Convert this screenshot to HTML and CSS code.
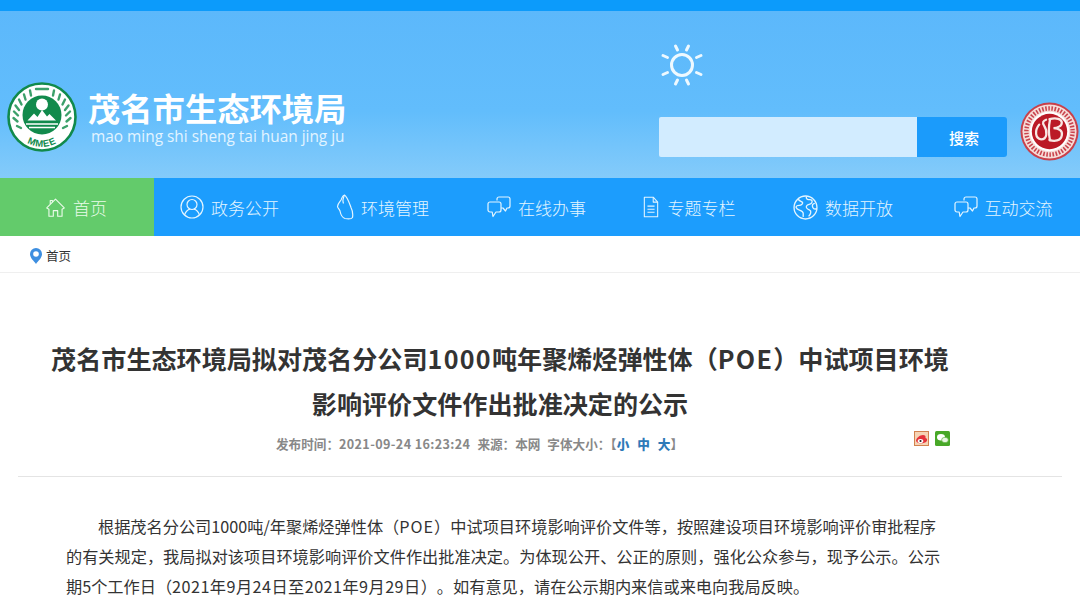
FILE: index.html
```html
<!DOCTYPE html>
<html lang="zh-CN">
<head>
<meta charset="utf-8">
<title>茂名市生态环境局</title>
<link rel="stylesheet" href="styles.css">
</head>
<body>
<div class="topbar"></div>
<header class="header">
  <svg class="logo" viewBox="0 0 70 70" width="70" height="70">
    <circle cx="35" cy="35" r="33.500" fill="#fff" stroke="#118a4c" stroke-width="2.600"/>
    <g fill="none" stroke="#3ba06a" stroke-width="2.400" stroke-linecap="round">
      <path d="M6.500 36l4 3.500M7 29.500l4 4M8.500 23.500l3.500 4.500M12 17.500l2.500 5M17 12.500l1.500 5M23 8.500l1 5M10 44l4 2"/>
      <path d="M63.500 36l-4 3.500M63 29.500l-4 4M61.500 23.500l-3.500 4.500M58 17.500l-2.500 5M53 12.500l-1.500 5M47 8.500l-1 5M60 44l-4 2"/>
      <path d="M29 7h12"/>
    </g>
    <circle cx="35" cy="33" r="19.500" fill="#118a4c"/>
    <circle cx="35" cy="22.500" r="6" fill="#fff"/>
    <path d="M20.500 38.500l6.500-7 3.500 3.500 4.500-7 5 6.500 2.500-2.500 6.500 6.500z" fill="#fff"/>
    <path d="M19 42h32M22 45.500h26" stroke="#fff" stroke-width="1.500"/>
    <defs><path id="logoArc" d="M9 49.500a29.800 29.800 0 0 0 52 0"/></defs>
    <text class="logo-mark"><textPath href="#logoArc" startOffset="50%" text-anchor="middle">MMEE</textPath></text>
  </svg>
  <div class="brand">
    <div class="brand-name">茂名市生态环境局</div>
    <div class="brand-pinyin">mao ming shi sheng tai huan jing ju</div>
  </div>
  <div class="tools">
    <svg class="sun" viewBox="0 0 44 44" width="44" height="44" fill="none" stroke="#eef9ff" stroke-linecap="round">
      <circle cx="22" cy="22" r="10.500" stroke-width="3"/>
      <path stroke-width="3" d="M15.500 3l2 4M28.500 3l-2 4M3 12.500l4.500 2M41 12.500l-4.500 2M3 31.500l4.500-2M41 31.500l-4.500-2M15.500 41l2-4M28.500 41l-2-4"/>
    </svg>
    <form class="search">
      <div class="search-input"></div>
      <div class="search-btn">搜索</div>
    </form>
  </div>
  <svg class="emblem" viewBox="0 0 60 60" width="59" height="59">
    <circle cx="30" cy="30" r="29.500" fill="#c9404a"/>
    <circle cx="30" cy="30" r="27.500" fill="#f6dcd8"/>
    <circle cx="30" cy="30" r="23.500" fill="none" stroke="#c9434d" stroke-width="4.500" stroke-dasharray="1.600 1.600"/>
    <circle cx="30" cy="30" r="20" fill="#fff"/>
    <circle cx="30" cy="30" r="18" fill="#bb1a26"/>
    <g fill="none" stroke="#f9e8e4" stroke-width="2.300" stroke-linecap="round">
      <path d="M19.500 23c-5 6-4 14 2 15 6 0 7-8 3-14-2-3-1-5 2-6"/>
      <path d="M30 17.500c7-2 12.500 0 12.500 3.500s-4.500 5.500-8.500 5.500c6 0 9.500 3 8.500 7.500-1 5.500-7.500 6.500-12.500 4.500"/>
      <path d="M30.500 18c-1.500 7-1.500 14 0 21"/>
    </g>
  </svg>
</header>
<nav class="nav">
  <a class="nav-item active">
    <svg class="nav-ico" viewBox="0 0 24 24" width="21" height="21" fill="none" stroke="currentColor" stroke-width="1.300" stroke-linejoin="round"><path d="M2 12.500 12 2.500l10 10-2.500 1.500v8h-5v-6.500h-5V22h-5v-8z"/><path d="M6 8V4h2.500v2"/></svg>
    <span>首页</span>
  </a>
  <a class="nav-item">
    <svg class="nav-ico" viewBox="0 0 24 24" width="24" height="24" fill="none" stroke="currentColor" stroke-width="1.200"><circle cx="12" cy="12" r="11"/><circle cx="12" cy="9.500" r="5"/><path d="M4.500 20c1.500-4 4-5.500 5.500-5.800M19.500 20c-1.500-4-4-5.500-5.500-5.800"/></svg>
    <span>政务公开</span>
  </a>
  <a class="nav-item">
    <svg class="nav-ico" viewBox="0 0 18 26" width="18" height="26" fill="none" stroke="currentColor" stroke-width="1.200" stroke-linejoin="round"><path d="M8.500 1C6 1.500 6 4 5 6 3.500 8 1.500 10 1.500 12.500c0 1.500 2 2.500 2.500 4.500.6 3 1.500 6.500 5 7.500 3 .6 6.500.5 7.500-1 .5-3 .5-6-1.500-10C13.500 9.500 11.500 3 8.500 1z"/><path d="M8.500 1C7 4 6.500 7 7.500 9.500"/></svg>
    <span>环境管理</span>
  </a>
  <a class="nav-item">
    <svg class="nav-ico" viewBox="0 0 24 24" width="24" height="24" fill="none" stroke="currentColor" stroke-width="1.200" stroke-linejoin="round"><path d="M10 5.500V4a2 2 0 0 1 2-2h9a2 2 0 0 1 2 2v7a2 2 0 0 1-2 2h-1l-1.500 3-2.500-3h-2"/><path d="M3 7h9a2 2 0 0 1 2 2v6a2 2 0 0 1-2 2H9l-3 4.500-.8-4.500H3a2 2 0 0 1-2-2V9a2 2 0 0 1 2-2z"/></svg>
    <span>在线办事</span>
  </a>
  <a class="nav-item doc">
    <svg class="nav-ico" viewBox="0 0 18 24" width="16" height="22" fill="none" stroke="currentColor" stroke-width="1.200" stroke-linejoin="round"><path d="M1.500 1h10l5 5.500V23h-15z"/><path d="M11.500 1v5.500h5M5 11h8M5 14.500h8M5 18h8"/></svg>
    <span>专题专栏</span>
  </a>
  <a class="nav-item">
    <svg class="nav-ico" viewBox="0 0 24 24" width="25" height="25" fill="none" stroke="currentColor" stroke-width="1.300" stroke-linejoin="round"><circle cx="12" cy="12" r="11"/><path d="M5 4c1 2 3 2 4 3s-1 3-3 3-3 0-3 2c1 3 4 2 6 4s0 3 1 5M13 1.500c-1 2 1 3 3 3s3 1 2 3-4 1-5 3 1 3 3 4 1 4-1 6M21 8c-2 0-3 2-2 4s2 2 4 1"/></svg>
    <span>数据开放</span>
  </a>
  <a class="nav-item last">
    <svg class="nav-ico" viewBox="0 0 24 24" width="24" height="24" fill="none" stroke="currentColor" stroke-width="1.200" stroke-linejoin="round"><path d="M10 5.500V4a2 2 0 0 1 2-2h9a2 2 0 0 1 2 2v7a2 2 0 0 1-2 2h-1l-1.500 3-2.500-3h-2"/><path d="M3 7h9a2 2 0 0 1 2 2v6a2 2 0 0 1-2 2H9l-3 4.500-.8-4.500H3a2 2 0 0 1-2-2V9a2 2 0 0 1 2-2z"/></svg>
    <span>互动交流</span>
  </a>
</nav>
<div class="crumb">
  <svg class="pin" viewBox="0 0 12 16" width="12" height="16"><path d="M6 0a6 6 0 0 1 6 6c0 4-4 7-6 10C4 13 0 10 0 6a6 6 0 0 1 6-6z" fill="#3d8ee0"/><circle cx="6" cy="6" r="2.800" fill="#fff"/></svg>
  <span>首页</span>
</div>
<main class="main">
  <h1 class="title">茂名市生态环境局拟对茂名分公司<span class="latin">1000</span>吨年聚烯烃弹性体（<span class="latin">POE</span>）中试项目环境<br>影响评价文件作出批准决定的公示</h1>
  <div class="meta">
    <span class="meta-text">发布时间：<span class="digits">2021-09-24 16:23:24</span></span>
    <span class="meta-text">来源：本网</span>
    <span class="meta-text">字体大小：【<b class="size">小</b><b class="size">中</b><b class="size">大</b>】</span>
    <div class="share">
      <svg viewBox="0 0 15 15" width="15" height="15"><rect x=".5" y=".5" width="14" height="14" fill="#f6d3b4" stroke="#d2824f"/><path d="M2 10c0-3 4-6 7-6 2 0 3 1 2.500 3 2 .5 2 2 1 3.500-1.500 2-9 3-10.500-.5z" fill="#e5333a"/><ellipse cx="6.500" cy="10" rx="2.800" ry="2" fill="#fff"/><circle cx="6.500" cy="10" r="1.100" fill="#222"/></svg>
      <svg viewBox="0 0 15 15" width="15" height="15"><rect width="15" height="15" rx="1.500" fill="#48a828"/><ellipse cx="6" cy="6.200" rx="4" ry="3.200" fill="#fff"/><ellipse cx="10" cy="9" rx="3.400" ry="2.700" fill="#eaf7e4" stroke="#48a828" stroke-width=".6"/></svg>
    </div>
  </div>
  <article class="article">
    <p>根据茂名分公司1000吨/年聚烯烃弹性体（<span class="body-latin">POE</span>）中试项目环境影响评价文件等，按照建设项目环境影响评价审批程序的有关规定，我局拟对该项目环境影响评价文件作出批准决定。为体现公开、公正的原则，强化公众参与，现予公示。公示期5个工作日（<span class="body-date">2021年9月24日至2021年9月29日</span>）。如有意见，请在公示期内来信或来电向我局反映。</p>
  </article>
</main>
</body>
</html>
```
FILE: styles.css
```css
* { box-sizing: border-box; }
html, body { margin: 0; height: 600px; overflow: hidden; }
body { background: #fff; font-family: "Noto Sans CJK SC", "Liberation Sans", sans-serif; color: #333; }
.topbar { height: 11px; background: #0c9bfb; }
.header {
  height: 167px;
  background: linear-gradient(180deg, #5cb8fb 0%, #62bdfc 60%, #84cbfa 100%);
  display: flex;
  align-items: flex-start;
  padding: 0 0 0 7px;
}
.logo { margin-top: 71px; flex: none; }
.logo-mark { font: bold 9.500px "Liberation Sans", sans-serif; fill: #118a4c; letter-spacing: .6px; }
.brand { margin: 76px 0 0 11px; width: 571px; }
.brand-name { font-size: 32.300px; line-height: 40px; font-weight: 700; color: #fff; white-space: nowrap; }
.brand-pinyin { font-family: "Open Sans", "Liberation Sans", sans-serif; font-size: 15.400px; line-height: 20px; color: #e3f4ff; margin: 0 0 0 3px; white-space: nowrap; }
.tools { display: flex; flex-direction: column; width: 348px; margin-top: 32px; flex: none; }
.sun { margin: 0 0 30px 1px; display: block; }
.search { display: flex; height: 40px; margin: 0; }
.search-input { width: 258px; background: #d2ecff; border-radius: 2px 0 0 2px; }
.search-btn { width: 90px; padding-left: 4px; background: #1b9bfb; color: #fff; border-radius: 0 3px 3px 0; font-size: 15px; font-weight: 500; display: flex; align-items: center; justify-content: center; }
.emblem { margin: 91px 0 0 13px; flex: none; }
.nav { height: 58px; background: #1c9dfd; display: grid; grid-template-columns: 154px 151px 155px 153px 152px 156px 159px; }
.nav-item { display: flex; align-items: center; justify-content: center; gap: 7px; color: #e4f5ff; font-size: 17px; font-weight: 300; }
.nav-item.active { background: #63cb6b; color: #eafbe9; padding-right: 2px; }
.nav-item.doc { gap: 9px; }
.nav-item.last { padding-left: 5px; }
.nav-ico { flex: none; }
.crumb { height: 37px; display: flex; align-items: center; gap: 4px; padding: 3px 0 0 30px; border-bottom: 1px solid #efefef; font-size: 12.500px; color: #333; }
.main { padding: 0 18px; }
.title { margin: 0; padding: 63px 80px 0 0; text-align: center; font-size: 25.100px; line-height: 45px; font-weight: 700; color: #333; white-space: nowrap; }
.latin { letter-spacing: 1.300px; }
.meta { display: flex; height: 51px; padding: 0 112px 0 258px; border-bottom: 1px solid #e4e4e4; gap: 7px; font-size: 12.600px; font-weight: 700; color: #888; }
.meta-text { line-height: 36px; white-space: nowrap; }
.digits { letter-spacing: .37px; }
.size { color: #2e7ab8; margin-right: 8px; }
.size:last-child { margin-right: 0; }
.share { margin-left: auto; display: flex; gap: 6px; padding-top: 5px; }
.share svg { display: block; }
.article { padding: 34px 0 0; }
.article p { margin: 0; padding: 0 117px 0 48px; text-indent: 32px; font-size: 16.200px; line-height: 30px; color: #333; text-spacing-trim: space-all; }
.body-latin { letter-spacing: 1px; }
.body-date { letter-spacing: .45px; }
```
